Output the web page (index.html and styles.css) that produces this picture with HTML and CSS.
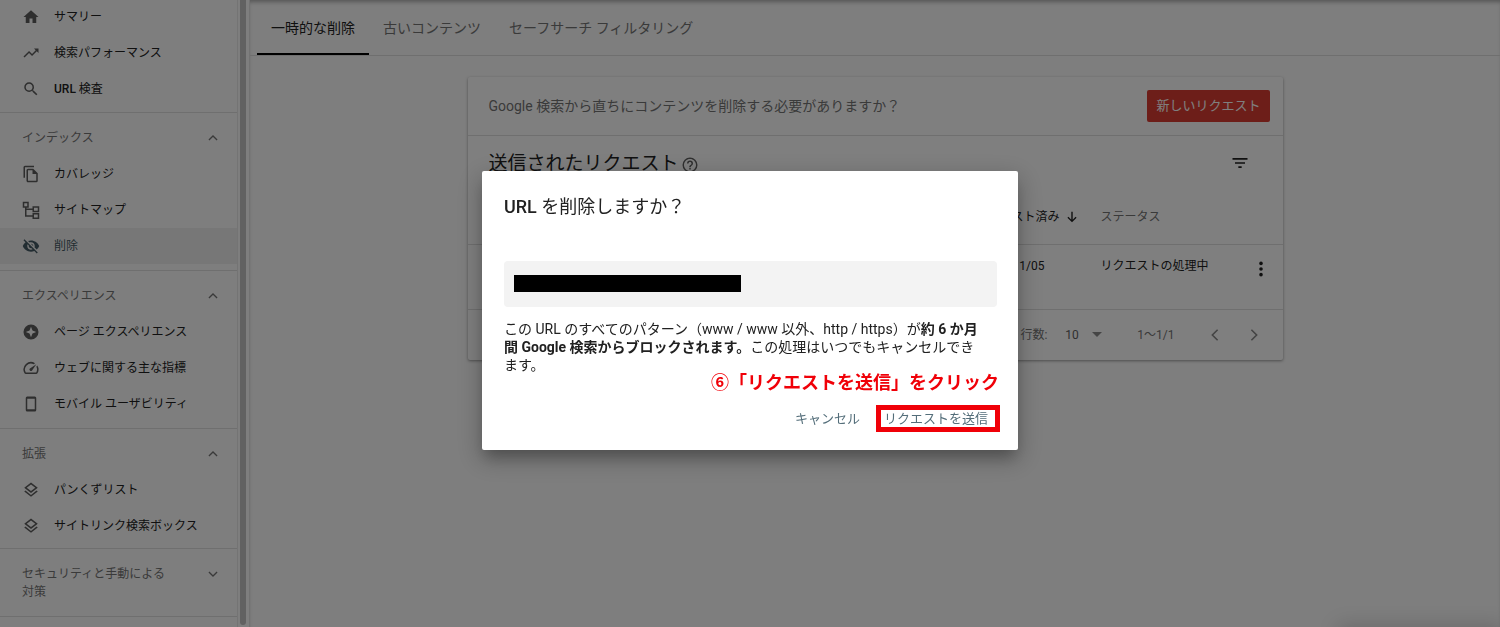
FILE: index.html
```html
<!DOCTYPE html>
<html lang="ja">
<head>
<meta charset="utf-8">
<title>削除</title>
<meta name="viewport" content="width=device-width, initial-scale=1">
<link rel="stylesheet" href="styles.css">
</head>
<body>
<svg class="defs" aria-hidden="true">
  <symbol id="i-up" viewBox="0 0 24 24"><path d="M5 15.500l7-7 7 7" fill="none" stroke="currentColor" stroke-width="2.200"/></symbol>
  <symbol id="i-down" viewBox="0 0 24 24"><path d="M5 8.500l7 7 7-7" fill="none" stroke="currentColor" stroke-width="2.200"/></symbol>
  <symbol id="i-layers" viewBox="0 0 24 24"><path d="M11.990 18.540l-7.370-5.730L3 14.070l9 7 9-7-1.630-1.270zM12 16l7.360-5.730L21 9l-9-7-9 7 1.630 1.270L12 16zm0-11.470L17.740 9 12 13.470 6.260 9 12 4.530z"/></symbol>
</svg>
<div class="app">
  <nav class="sidebar" aria-label="メニュー">
    <div class="group group-first">
      <a class="item" href="#"><svg class="icon" viewBox="0 0 24 24"><path d="M10 20v-6h4v6h5v-8h3L12 3 2 12h3v8z"/></svg>サマリー</a>
      <a class="item" href="#"><svg class="icon" viewBox="0 0 24 24"><path d="M16 6l2.290 2.290-4.880 4.880-4-4L2 16.590 3.410 18l6-6 4 4 6.300-6.290L22 12V6z"/></svg>検索パフォーマンス</a>
      <a class="item" href="#"><svg class="icon" viewBox="0 0 24 24"><path d="M15.500 14h-.79l-.28-.27A6.470 6.470 0 0 0 16 9.500 6.500 6.500 0 1 0 9.500 16c1.610 0 3.090-.59 4.230-1.570l.27.28v.79l5 4.990L20.490 19l-4.990-5zm-6 0C7.010 14 5 11.990 5 9.500S7.010 5 9.500 5 14 7.010 14 9.500 11.990 14 9.500 14z"/></svg><span><span class="medium">URL</span> 検査</span></a>
    </div>
    <div class="group">
      <button class="heading" type="button"><span>インデックス</span><svg class="chev"><use href="#i-up"/></svg></button>
      <a class="item" href="#"><svg class="icon" viewBox="0 0 24 24"><path d="M16 1H4a2 2 0 0 0-2 2v14h2V3h12V1zm-1 4H8a2 2 0 0 0-2 2v14c0 1.100.9 2 2 2h11a2 2 0 0 0 2-2V11l-6-6zM8 21V7h6v5h5v9H8z"/></svg>カバレッジ</a>
      <a class="item" href="#"><svg class="icon" viewBox="0 0 24 24"><path d="M2 2h6v6H2zM15 8h7v6h-7zM15 17h7v6h-7zM5 8v12h10M5 11h10" fill="none" stroke="currentColor" stroke-width="2"/></svg>サイトマップ</a>
      <a class="item selected" href="#" aria-current="page"><svg class="icon" viewBox="0 0 24 24"><path d="M12 7c2.760 0 5 2.240 5 5 0 .65-.13 1.260-.36 1.830l2.920 2.920c1.510-1.260 2.700-2.890 3.430-4.750-1.730-4.390-6-7.500-11-7.500-1.400 0-2.740.25-3.980.7l2.160 2.160C10.740 7.130 11.350 7 12 7zM2 4.270l2.280 2.280.46.46A11.804 11.804 0 0 0 1 12c1.730 4.390 6 7.500 11 7.500 1.550 0 3.030-.3 4.380-.84l.42.42L19.730 22 21 20.730 3.270 3 2 4.270zM7.530 9.800l1.550 1.550c-.05.21-.08.43-.08.65 0 1.660 1.340 3 3 3 .22 0 .44-.03.65-.08l1.550 1.550c-.67.33-1.410.53-2.200.53-2.760 0-5-2.240-5-5 0-.79.2-1.530.53-2.200zm4.310-.78l3.150 3.150.02-.16c0-1.660-1.340-3-3-3l-.17.01z"/></svg>削除</a>
    </div>
    <div class="group">
      <button class="heading" type="button"><span>エクスペリエンス</span><svg class="chev"><use href="#i-up"/></svg></button>
      <a class="item" href="#"><svg class="icon" viewBox="0 0 24 24"><path fill-rule="evenodd" d="M12 2a10 10 0 1 0 0 20 10 10 0 0 0 0-20zM12 5l2 5 5 2-5 2-2 5-2-5-5-2 5-2z"/></svg>ページ エクスペリエンス</a>
      <a class="item" href="#"><svg class="icon" viewBox="0 0 24 24"><path d="M20.380 8.570l-1.230 1.850a8 8 0 0 1-.22 7.580H5.070A8 8 0 0 1 15.580 6.850l1.850-1.230A10 10 0 0 0 3.350 19a2 2 0 0 0 1.720 1h13.850a2 2 0 0 0 1.740-1 10 10 0 0 0-.27-10.440zm-9.790 6.840a2 2 0 0 0 2.830 0l5.660-8.490-8.490 5.660a2 2 0 0 0 0 2.830z"/></svg>ウェブに関する主な指標</a>
      <a class="item" href="#"><svg class="icon" viewBox="0 0 24 24"><path fill-rule="evenodd" d="M7 2h10a2 2 0 0 1 2 2v16a2 2 0 0 1-2 2H7a2 2 0 0 1-2-2V4a2 2 0 0 1 2-2zM7 5v14h10V5z"/></svg>モバイル ユーザビリティ</a>
    </div>
    <div class="group group-short">
      <button class="heading" type="button"><span>拡張</span><svg class="chev"><use href="#i-up"/></svg></button>
      <a class="item" href="#"><svg class="icon"><use href="#i-layers"/></svg>パンくずリスト</a>
      <a class="item" href="#"><svg class="icon"><use href="#i-layers"/></svg>サイトリンク検索ボックス</a>
    </div>
    <div class="group group-closed">
      <button class="heading" type="button"><span>セキュリティと手動による<br>対策</span><svg class="chev"><use href="#i-down"/></svg></button>
    </div>
  </nav>
  <div class="track"><div class="thumb"></div></div>
  <main class="main">
    <div class="tabs" role="tablist">
      <button class="tab active" type="button" role="tab" aria-selected="true">一時的な削除</button>
      <button class="tab" type="button" role="tab" aria-selected="false">古いコンテンツ</button>
      <button class="tab" type="button" role="tab" aria-selected="false">セーフサーチ フィルタリング</button>
    </div>
    <section class="card">
      <header class="card-top">
        <p>Google 検索から直ちにコンテンツを削除する必要がありますか？</p>
        <button class="new" type="button">新しいリクエスト</button>
      </header>
      <div class="card-title">
        <h2>送信されたリクエスト</h2>
        <svg class="help" viewBox="0 0 24 24"><path d="M11 18h2v-2h-2v2zm1-16a10 10 0 1 0 0 20 10 10 0 0 0 0-20zm0 18c-4.410 0-8-3.590-8-8s3.590-8 8-8 8 3.590 8 8-3.590 8-8 8zm0-14a4 4 0 0 0-4 4h2c0-1.100.9-2 2-2s2 .9 2 2c0 2-3 1.750-3 5h2c0-2.250 3-2.500 3-5a4 4 0 0 0-4-4z"/></svg>
        <button class="icon-btn filter" type="button" aria-label="フィルタ"><svg viewBox="0 0 24 24"><path d="M10 18h4v-2h-4v2zM3 6v2h18V6H3zm3 7h12v-2H6v2z"/></svg></button>
      </div>
      <table class="requests">
        <thead>
          <tr><th class="c-url"></th><th class="c-date"><span class="sort">リクエスト済み<svg viewBox="0 0 24 24"><path d="M12 3v16M5 12.500l7 7 7-7" fill="none" stroke="currentColor" stroke-width="2.400"/></svg></span></th><th class="c-status">ステータス</th><th class="c-more"></th></tr>
        </thead>
        <tbody>
          <tr><td class="c-url"></td><td class="c-date">2021/11/05</td><td class="c-status">リクエストの処理中</td><td class="c-more"><button class="icon-btn" type="button" aria-label="その他"><svg viewBox="0 0 24 24"><circle cx="12" cy="4.500" r="2.400"/><circle cx="12" cy="12" r="2.400"/><circle cx="12" cy="19.500" r="2.400"/></svg></button></td></tr>
        </tbody>
      </table>
      <footer class="pager">
        <label for="rows">行数:</label>
        <span class="rows"><select id="rows"><option>10</option></select><svg viewBox="0 0 10 5"><path d="M0 0h10L5 5z"/></svg></span>
        <span class="range">1〜1/1</span>
        <button class="icon-btn" type="button" aria-label="前へ"><svg viewBox="0 0 24 24"><path d="M15.500 5l-7 7 7 7" fill="none" stroke="currentColor" stroke-width="2.200"/></svg></button>
        <button class="icon-btn" type="button" aria-label="次へ"><svg viewBox="0 0 24 24"><path d="M8.500 5l7 7-7 7" fill="none" stroke="currentColor" stroke-width="2.200"/></svg></button>
      </footer>
    </section>
  </main>
</div>
<div class="corner-shade"></div>
<div class="backdrop">
  <div class="dialog" role="dialog" aria-modal="true" aria-labelledby="dialog-title">
    <h1 id="dialog-title"><span class="medium">URL</span> を削除しますか？</h1>
    <div class="url-box"><div class="redacted"></div></div>
    <p class="message">この URL のすべてのパターン（www / www 以外、http / https）が<b>約 6 か月</b><br><b>間 Google 検索からブロックされます。</b>この処理はいつでもキャンセルでき<br>ます。</p>
    <p class="note">⑥「リクエストを送信」をクリック</p>
    <div class="actions">
      <button class="cancel" type="button">キャンセル</button>
      <button class="send" type="button">リクエストを送信</button>
    </div>
  </div>
</div>
</body>
</html>
```
FILE: styles.css
```css
* { box-sizing: border-box; }
body {
  margin: 0;
  overflow: hidden;
  background: #fcfcfc;
  color: #212121;
  font: 12px/18px Roboto, "Noto Sans CJK JP", sans-serif;
}
h1, h2, p { margin: 0; font-weight: 400; }
button, select {
  margin: 0;
  padding: 0;
  border: 0;
  background: none;
  color: inherit;
  font: inherit;
}
svg { display: block; flex: none; fill: currentColor; }
.defs { position: absolute; width: 0; height: 0; }
.medium { font-weight: 500; }

.app { display: flex; height: 100vh; }

/* Sidebar */
.sidebar {
  flex: none;
  width: 238px;
  border-right: 1px solid #e8e8e8;
  overflow: hidden;
}
.group { padding: 7px 0 6px; border-top: 1px solid #dedede; }
.group-first { margin-top: -1px; padding: 0 0 5px; border: 0; }
.group-short { padding-bottom: 4px; }
.group-closed { border-bottom: 1px solid #dedede; }
.item {
  display: flex;
  align-items: center;
  gap: 14px;
  height: 36px;
  padding-left: 22px;
  color: #212121;
  text-decoration: none;
}
.icon { width: 18px; height: 18px; color: #5c5c5c; }
.selected { background: #efefef; color: #455a64; }
.selected .icon { color: #455a64; }
.heading {
  display: flex;
  justify-content: space-between;
  align-items: flex-start;
  width: 100%;
  padding: 9px 17px 9px 22px;
  color: #757575;
  text-align: left;
}
.chev { width: 14px; height: 14px; margin-top: 2px; }
.track {
  flex: none;
  width: 12px;
  padding: 0 3px 2px 2px;
  border-right: 1px solid #e4e4e4;
}
.thumb { height: 100%; border-radius: 0 0 4px 4px; background: #c2c2c2; }

/* Main column */
.main {
  flex: 1;
  min-width: 0;
  box-shadow: inset 0 4px 4px -2px #aaa;
}
.tabs {
  display: flex;
  height: 56px;
  padding-left: 7px;
  border-bottom: 1px solid #dedede;
}
.tab {
  padding: 3px 14px 0;
  border-bottom: 2px solid transparent;
  color: #757575;
  font-size: 14px;
}
.tab.active { border-color: #000; color: #212121; }

.card {
  max-width: 815px;
  margin: 21px auto 0;
  border-radius: 2px;
  background: #fff;
  box-shadow: 0 1px 3px #999;
}
.card-top {
  display: flex;
  justify-content: space-between;
  align-items: center;
  height: 59px;
  padding: 0 13px 0 21px;
  border-bottom: 1px solid #dedede;
  color: #757575;
  font-size: 14px;
}
.new {
  height: 32px;
  padding: 0 9px;
  border-radius: 2px;
  background: #db3d33;
  color: #fff;
  font-size: 13px;
}
.card-title {
  display: flex;
  align-items: center;
  height: 54px;
  padding: 0 33px 0 21px;
}
.card-title h2 { padding-top: 2px; font-size: 19px; line-height: 28px; }
.help { width: 18px; height: 18px; margin: 4px 0 0 2px; color: #616161; }
.icon-btn svg { width: 18px; height: 18px; }
.filter { margin-left: auto; }
.filter svg { width: 20px; height: 20px; }

.requests { width: 100%; border-collapse: collapse; table-layout: fixed; }
.requests th {
  height: 54px;
  padding: 1px 0 0;
  border-bottom: 1px solid #dedede;
  color: #757575;
  font-weight: 400;
  text-align: left;
}
.requests td {
  height: 65px;
  padding: 12px 0 0;
  border-bottom: 1px solid #dedede;
  vertical-align: top;
}
.requests .c-date { width: 125px; }
.requests td.c-date { padding-right: 56px; text-align: right; }
.requests .c-status { width: 151px; }
.requests .c-more { width: 31px; }
.requests td.c-more { padding-top: 15px; }
.sort { display: flex; align-items: center; gap: 5px; color: #212121; }
.sort svg { width: 14px; height: 14px; }

.pager {
  display: flex;
  align-items: center;
  justify-content: flex-end;
  height: 50px;
  padding-right: 20px;
  color: #757575;
}
.rows { display: flex; align-items: center; gap: 13px; margin: 0 35px 0 18px; }
.rows select { appearance: none; color: #616161; }
.rows svg { width: 10px; height: 5px; color: #8a8a8a; }
.range { margin-right: 31px; }
.pager .icon-btn { color: #8a8a8a; }
.pager .icon-btn + .icon-btn { margin-left: 21px; }

/* Shade cast by the panel docked under the lower right edge */
.corner-shade {
  position: fixed;
  right: 0;
  bottom: -20px;
  width: 160px;
  height: 20px;
  box-shadow: 0 0 20px 2px #d4d4d4;
}

/* Dialog */
.backdrop {
  position: fixed;
  inset: 0;
  display: flex;
  align-items: center;
  justify-content: center;
  padding-bottom: 6px;
  background: rgba(0, 0, 0, .5);
}
.dialog {
  width: 536px;
  padding: 22px 21px 18px 22px;
  border-radius: 2px;
  background: #fff;
  box-shadow: 0 10px 14px -4px rgba(0, 0, 0, .25), 0 8px 24px 4px rgba(0, 0, 0, .2);
}
.dialog h1 { font-size: 18px; line-height: 28px; }
.url-box {
  margin: 40px 0 13px;
  padding: 14px 10px 15px;
  border-radius: 4px;
  background: #f3f3f3;
}
.redacted { width: 227px; height: 17px; background: #000; }
.message { font-size: 14px; }
.message b { font-weight: 700; }
.note {
  margin-right: -2px;
  color: #f00008;
  font-size: 18px;
  font-weight: 700;
  text-align: right;
}
.actions {
  display: flex;
  align-items: center;
  justify-content: flex-end;
  gap: 16px;
  margin: 13px -3px 0 0;
  color: #546e7a;
  font-size: 13px;
}
.send { padding: 0 7px 0 3px; border: 5px solid #f00008; line-height: 17px; }
```
